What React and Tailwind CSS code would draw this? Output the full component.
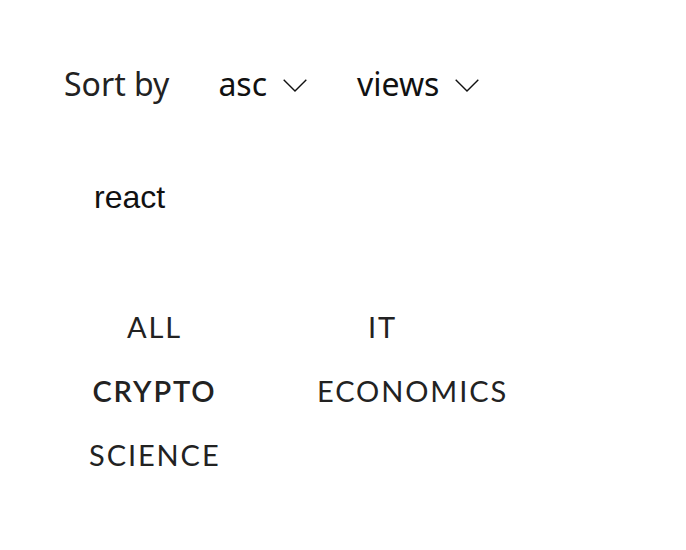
const categories = ['ALL', 'IT', 'CRYPTO', 'ECONOMICS', 'SCIENCE'];

function Chevron() {
  return (
    <svg width="24" height="13" viewBox="0 0 24 13" fill="none" className="ml-[16px] mt-[3px]">
      <path d="M0.7 0.7 L12 12 L23.3 0.7" stroke="#111" strokeWidth="1.4" />
    </svg>
  );
}

function Select({ value }) {
  return (
    <div className="flex items-center text-[32px] text-[#111] cursor-pointer">
      <span>{value}</span>
      <Chevron />
    </div>
  );
}

export default function App() {
  const active = 'CRYPTO';
  return (
    <div className="w-[686px] h-[550px] bg-white text-[#222]">
      <div className="flex items-center pl-[64px] pt-[60px] font-['Noto_Sans',sans-serif] leading-[48px]">
        <span className="text-[32px] text-[#222] mr-[49px]">Sort by</span>
        <Select value="asc" />
        <div className="w-[50px]" />
        <Select value="views" />
      </div>
      <div className="pl-[94px] pt-[69px] font-['Liberation_Sans',Arial,sans-serif] text-[32px] leading-[40px] text-[#111]">
        react
      </div>
      <div className="grid grid-cols-[131px_131px] gap-x-[97px] gap-y-[24px] ml-[89px] mt-[90px] font-['Lato',sans-serif] text-[29px] leading-[40px] tracking-[1.9px] text-center">
        {categories.map((c) => (
          <div key={c} className={c === active ? 'font-semibold text-[#222]' : 'text-[#222]'}>
            {c}
          </div>
        ))}
      </div>
    </div>
  );
}
